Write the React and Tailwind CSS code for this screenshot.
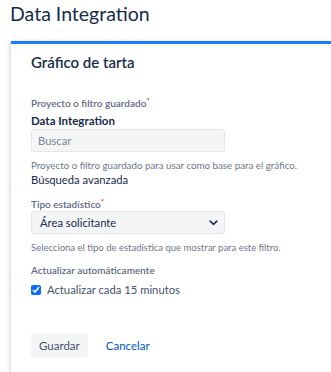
import React, { useState } from 'react';

const App = () => {
    const [autoRefresh, setAutoRefresh] = useState(true);

    return (
        <div className="w-[331px] h-[372px] overflow-hidden bg-white text-[#172b4d]" style={{ fontFamily: 'Lato, "Noto Sans", sans-serif' }}>
            <h1 className="px-[10px] h-[41px] text-[19.5px] leading-[28px] font-normal text-[#172b4d]">Data Integration</h1>

            <div className="ml-[11px] h-[331px] bg-white border-t-[3px] border-[#1e7aff] shadow-[-1px_1px_4px_rgba(9,30,66,0.2)] pl-[20px] pr-[10px] pt-[9px]">
                <h2 className="text-[15px] leading-[18px] font-semibold text-[#172b4d]">Gráfico de tarta</h2>

                {/* Proyecto o filtro */}
                <label className="mt-[26px] block text-[10px] leading-[12px] font-semibold text-[#5e6c84]">
                    Proyecto o filtro guardado<span className="text-[#de350b] relative top-[-3px] text-[8px]">*</span>
                </label>
                <div className="mt-[2px] text-[11.5px] leading-[17px] font-bold text-[#172b4d]">Data Integration</div>
                <input
                    className="block w-[194px] h-[23px] rounded-[3px] bg-[#f4f5f7] border border-[#e4e6ea] px-[6px] text-[11.25px] text-[#172b4d] placeholder:text-[#7a869a] outline-none"
                    placeholder="Buscar"
                />
                <p className="mt-[7px] text-[9.75px] leading-[13px] text-[#6b778c] whitespace-nowrap">Proyecto o filtro guardado para usar como base para el gráfico.</p>
                <p className="text-[11.25px] leading-[15px] text-[#172b4d]">Búsqueda avanzada</p>

                {/* Tipo estadístico */}
                <label className="mt-[11px] block text-[10px] leading-[12px] font-semibold text-[#5e6c84]">
                    Tipo estadístico<span className="text-[#de350b] relative top-[-3px] text-[8px]">*</span>
                </label>
                <div className="w-[194px] h-[23px] rounded-[3px] bg-[#f4f5f7] border border-[#e4e6ea] flex items-center justify-between pl-[8px] pr-[6px]">
                    <span className="text-[11.25px] leading-[15px] text-[#172b4d]">Área solicitante</span>
                    <svg width="9" height="6" viewBox="0 0 9 6" fill="none">
                        <path d="M1.2 1.2 L4.5 4.4 L7.8 1.2" stroke="#253858" strokeWidth="1.7" strokeLinecap="round" strokeLinejoin="round" />
                    </svg>
                </div>
                <p className="mt-[7px] text-[9.5px] leading-[13px] text-[#6b778c] whitespace-nowrap">Selecciona el tipo de estadística que mostrar para este filtro.</p>

                {/* Actualizar */}
                <label className="mt-[10px] block text-[10px] leading-[12px] font-semibold text-[#5e6c84]">Actualizar automáticamente</label>
                <label className="mt-[6px] h-[15px] flex items-center gap-[6px] cursor-pointer">
                    <input
                        type="checkbox"
                        checked={autoRefresh}
                        onChange={() => setAutoRefresh(!autoRefresh)}
                        className="m-0 w-[10px] h-[10px] accent-[#0b6bff]"
                    />
                    <span className="text-[11.25px] leading-[15px] text-[#42526e]">Actualizar cada 15 minutos</span>
                </label>

                <div className="mt-[36px] flex items-center gap-[10px]">
                    <button className="h-[25px] px-[8px] rounded-[3px] bg-[#f4f5f7] text-[11.5px] text-[#42526e]">Guardar</button>
                    <button className="h-[25px] px-[8px] text-[11.5px] text-[#0052cc]">Cancelar</button>
                </div>
            </div>
        </div>
    );
};

export default App;
